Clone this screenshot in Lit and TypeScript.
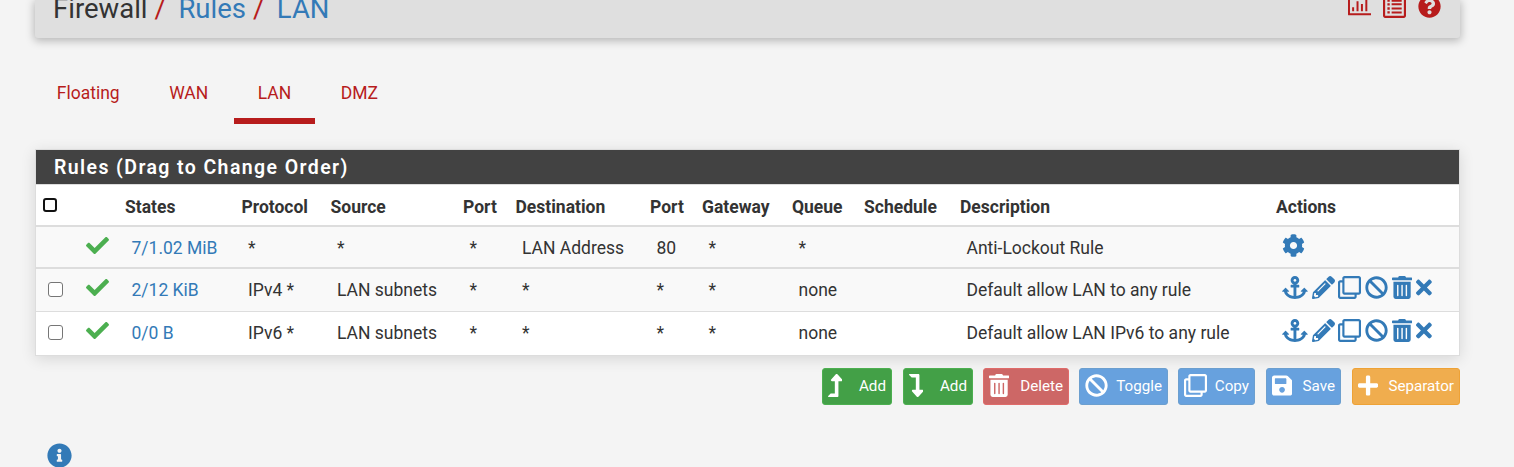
import { LitElement, html, css, svg } from "lit";
import { customElement, property } from "lit/decorators.js";

type Glyph = { w: number; d: string };

const GLYPHS: Record<string, Glyph> = {
  check: { w: 512, d: "M173.898 439.404l-166.4-166.4c-9.997-9.997-9.997-26.206 0-36.204l36.203-36.204c9.997-9.998 26.207-9.998 36.204 0L192 312.69 432.095 72.596c9.997-9.997 26.207-9.997 36.204 0l36.203 36.204c9.997 9.997 9.997 26.206 0 36.204l-294.4 294.401c-9.998 9.997-26.207 9.997-36.204-.001z" },
  cog: { w: 512, d: "M487.4 315.7l-42.6-24.6c4.3-23.2 4.3-47 0-70.2l42.6-24.6c4.9-2.8 7.1-8.6 5.5-14-11.1-35.6-30-67.8-54.7-94.6-3.8-4.1-10-5.1-14.8-2.3L380.8 110c-17.9-15.4-38.5-27.3-60.8-35.1V25.8c0-5.6-3.9-10.5-9.4-11.7-36.7-8.2-74.3-7.8-109.2 0-5.5 1.2-9.4 6.1-9.4 11.7V75c-22.2 7.9-42.8 19.8-60.8 35.1L88.7 85.5c-4.9-2.8-11-1.9-14.8 2.3-24.7 26.7-43.6 58.9-54.7 94.6-1.7 5.4.6 11.2 5.5 14L67.3 221c-4.3 23.2-4.3 47 0 70.2l-42.6 24.6c-4.9 2.8-7.1 8.6-5.5 14 11.1 35.6 30 67.8 54.7 94.6 3.8 4.1 10 5.1 14.8 2.3l42.6-24.6c17.9 15.4 38.5 27.3 60.8 35.1v49.2c0 5.6 3.9 10.5 9.4 11.7 36.7 8.2 74.3 7.8 109.2 0 5.5-1.2 9.4-6.1 9.4-11.7v-49.2c22.2-7.9 42.8-19.8 60.8-35.1l42.6 24.6c4.9 2.8 11 1.9 14.8-2.3 24.7-26.7 43.6-58.9 54.7-94.6 1.5-5.5-.7-11.3-5.6-14.1zM256 336c-44.1 0-80-35.9-80-80s35.9-80 80-80 80 35.9 80 80-35.9 80-80 80z" },
  anchor: { w: 576, d: "M12.971 352h32.394C67.172 454.735 181.944 512 288 512c106.229 0 220.853-57.38 242.635-160h32.394c10.691 0 16.045-12.926 8.485-20.485l-67.029-67.029c-4.686-4.686-12.284-4.686-16.971 0l-67.029 67.029c-7.56 7.56-2.206 20.485 8.485 20.485h35.146c-20.29 54.317-84.963 86.588-144.117 94.015V256h52c6.627 0 12-5.373 12-12v-40c0-6.627-5.373-12-12-12h-52v-5.47c37.281-13.226 63.995-48.816 63.995-90.53C383.994 42.804 340.849-.185 287.55.001 234.871.185 192 42.95 192 95.999c0 41.713 26.714 77.304 63.995 90.53V192H204c-6.627 0-12 5.373-12 12v40c0 6.627 5.373 12 12 12h52v190.015c-58.936-7.399-123.82-39.679-144.117-94.015h35.146c10.691 0 16.045-12.926 8.485-20.485l-67.029-67.029c-4.686-4.686-12.284-4.686-16.971 0L4.485 331.515C-3.074 339.074 2.28 352 12.971 352zM288 64c17.645 0 32 14.355 32 32s-14.355 32-32 32-32-14.355-32-32 14.355-32 32-32z" },
  pencil: { w: 512, d: "M497.9 142.1l-46.1 46.1c-4.7 4.7-12.3 4.7-17 0l-111-111c-4.7-4.7-4.7-12.3 0-17l46.1-46.1c18.7-18.7 49.1-18.7 67.9 0l60.1 60.1c18.8 18.7 18.8 49.1 0 67.9zM284.2 99.8L21.6 362.4.4 483.9c-2.9 16.4 11.4 30.6 27.8 27.8l121.5-21.3 262.6-262.6c4.7-4.7 4.7-12.3 0-17l-111-111c-4.8-4.7-12.4-4.7-17.1 0zM124.1 339.9c-5.5-5.5-5.5-14.3 0-19.8l154-154c5.5-5.5 14.3-5.5 19.8 0s5.5 14.3 0 19.8l-154 154c-5.5 5.5-14.3 5.5-19.8 0zM88 424h48v36.3l-64.5 11.3-31.1-31.1L51.7 376H88v48z" },
  clone: { w: 512, d: "M464 0H144c-26.51 0-48 21.49-48 48v48H48c-26.51 0-48 21.49-48 48v320c0 26.51 21.49 48 48 48h320c26.51 0 48-21.49 48-48v-48h48c26.51 0 48-21.49 48-48V48c0-26.51-21.49-48-48-48zM362 464H54a6 6 0 0 1-6-6V150a6 6 0 0 1 6-6h42v224c0 26.51 21.49 48 48 48h224v42a6 6 0 0 1-6 6zm96-96H150a6 6 0 0 1-6-6V54a6 6 0 0 1 6-6h308a6 6 0 0 1 6 6v308a6 6 0 0 1-6 6z" },
  ban: { w: 512, d: "M256 8C119.034 8 8 119.033 8 256s111.034 248 248 248 248-111.034 248-248S392.967 8 256 8zm130.108 117.892c65.448 65.448 70 165.481 20.677 235.637L150.47 105.216c70.204-49.356 170.226-44.735 235.638 20.676zM125.892 386.108c-65.448-65.448-70-165.481-20.677-235.637L361.53 406.784c-70.203 49.356-170.226 44.736-235.638-20.676z" },
  trash: { w: 448, d: "M32 464a48 48 0 0 0 48 48h288a48 48 0 0 0 48-48V128H32zm272-256a16 16 0 0 1 32 0v224a16 16 0 0 1-32 0zm-96 0a16 16 0 0 1 32 0v224a16 16 0 0 1-32 0zm-96 0a16 16 0 0 1 32 0v224a16 16 0 0 1-32 0zM432 32H312l-9.4-18.7A24 24 0 0 0 281.1 0H166.8a23.72 23.72 0 0 0-21.4 13.3L136 32H16A16 16 0 0 0 0 48v32a16 16 0 0 0 16 16h416a16 16 0 0 0 16-16V48a16 16 0 0 0-16-16z" },
  times: { w: 352, d: "M242.72 256l100.07-100.07c12.28-12.28 12.28-32.19 0-44.48l-22.24-22.24c-12.28-12.28-32.19-12.28-44.48 0L176 189.28 75.93 89.21c-12.28-12.28-32.19-12.28-44.48 0L9.21 111.45c-12.28 12.28-12.28 32.19 0 44.48L109.28 256 9.21 356.07c-12.28 12.28-12.28 32.19 0 44.48l22.24 22.24c12.28 12.28 32.2 12.28 44.48 0L176 322.72l100.07 100.07c12.28 12.28 32.2 12.28 44.48 0l22.24-22.24c12.28-12.28 12.28-32.19 0-44.48L242.72 256z" },
  up: { w: 320, d: "M313.553 119.669L209.587 7.666c-9.485-10.214-25.676-10.229-35.174 0L70.438 119.669C56.232 134.969 67.062 160 88.025 160H152v272H68.024a11.996 11.996 0 0 0-8.485 3.515l-56 56C-4.021 499.074 1.333 512 12.024 512H208c13.255 0 24-10.745 24-24V160h63.966c20.878 0 31.851-24.969 17.587-40.331z" },
  down: { w: 320, d: "M313.553 392.331L209.587 504.334c-9.485 10.214-25.676 10.229-35.174 0L70.438 392.331C56.232 377.031 67.062 352 88.025 352H152V80H68.024a11.996 11.996 0 0 1-8.485-3.515l-56-56C-4.021 12.926 1.333 0 12.024 0H208c13.255 0 24 10.745 24 24v328h63.966c20.878 0 31.851 24.969 17.587 40.331z" },
  save: { w: 448, d: "M433.941 129.941l-83.882-83.882A48 48 0 0 0 316.118 32H48C21.49 32 0 53.49 0 80v352c0 26.51 21.49 48 48 48h352c26.51 0 48-21.49 48-48V163.882a48 48 0 0 0-14.059-33.941zM224 416c-35.346 0-64-28.654-64-64 0-35.346 28.654-64 64-64s64 28.654 64 64c0 35.346-28.654 64-64 64zm96-304.52V212c0 6.627-5.373 12-12 12H76c-6.627 0-12-5.373-12-12V108c0-6.627 5.373-12 12-12h228.52c3.183 0 6.235 1.264 8.485 3.515l3.48 3.48A11.996 11.996 0 0 1 320 111.48z" },
  plus: { w: 448, d: "M416 208H272V64c0-17.67-14.33-32-32-32h-32c-17.67 0-32 14.33-32 32v144H32c-17.67 0-32 14.33-32 32v32c0 17.67 14.33 32 32 32h144v144c0 17.67 14.33 32 32 32h32c17.67 0 32-14.33 32-32V304h144c17.67 0 32-14.33 32-32v-32c0-17.67-14.33-32-32-32z" },
  info: { w: 512, d: "M256 8C119.043 8 8 119.083 8 256c0 136.997 111.043 248 248 248s248-111.003 248-248C504 119.083 392.957 8 256 8zm0 110c23.196 0 42 18.804 42 42s-18.804 42-42 42-42-18.804-42-42 18.804-42 42-42zm56 254c0 6.627-5.373 12-12 12h-88c-6.627 0-12-5.373-12-12v-24c0-6.627 5.373-12 12-12h12v-64h-12c-6.627 0-12-5.373-12-12v-24c0-6.627 5.373-12 12-12h64c6.627 0 12 5.373 12 12v100h12c6.627 0 12 5.373 12 12v24z" },
  question: { w: 512, d: "M504 256c0 136.997-111.043 248-248 248S8 392.997 8 256C8 119.083 119.043 8 256 8s248 111.083 248 248zM262.655 90c-54.497 0-89.255 22.957-116.549 63.758-3.536 5.286-2.353 12.415 2.715 16.258l34.699 26.31c5.205 3.947 12.621 3.008 16.665-2.122 17.864-22.658 30.113-35.797 57.303-35.797 20.429 0 45.698 13.148 45.698 32.958 0 14.976-12.363 22.667-32.534 33.976C247.128 238.528 216 254.941 216 296v4c0 6.627 5.373 12 12 12h56c6.627 0 12-5.373 12-12v-1.333c0-28.462 83.186-29.647 83.186-106.667 0-58.002-60.165-102-116.531-102zM256 338c-25.365 0-46 20.635-46 46 0 25.364 20.635 46 46 46s46-20.636 46-46c0-25.365-20.635-46-46-46z" },
  chart: { w: 512, d: "M0 64H44V408H512V452H20Q0 452 0 432ZM92 270H136V364H92ZM190 140H234V364H190ZM288 200H332V364H288ZM386 90H430V364H386Z" },
  list: { w: 512, d: "M464 0H48C21.5 0 0 21.5 0 48v416c0 26.500 21.500 48 48 48h416c26.500 0 48-21.500 48-48V48c0-26.500-21.500-48-48-48zM464 464H48V48H464zM192 104H416V148H192ZM192 186H416V230H192ZM192 278H416V322H192ZM192 366H416V410H192ZM98 100H150V152H98ZM98 182H150V234H98ZM98 274H150V326H98ZM98 362H150V414H98Z" },
};

@customElement("fw-icon")
class FwIcon extends LitElement {
  @property() name = "check";
  static styles = css`
    :host { display: inline-block; height: 23px; flex: none; }
    svg { display: block; height: 100%; width: auto; fill: currentColor; fill-rule: evenodd; }
  `;
  render() {
    const g = GLYPHS[this.name];
    return html`<svg viewBox="0 0 ${g.w} 512" width=${(g.w * 23) / 512} height="23">${svg`<path d=${g.d}></path>`}</svg>`;
  }
}

const COLUMNS = ["", "", "States", "Protocol", "Source", "Port", "Destination", "Port", "Gateway", "Queue", "Schedule", "Description", "Actions"];

const EDIT = ["anchor", "pencil", "clone", "ban", "trash", "times"];
const RULES = [
  { kind: "lockout", select: false, cells: ["7/1.02 MiB", "*", "*", "*", "LAN Address", "80", "*", "*", "", "Anti-Lockout Rule"], actions: ["cog"] },
  { kind: "striped", select: true, cells: ["2/12 KiB", "IPv4 *", "LAN subnets", "*", "*", "*", "*", "none", "", "Default allow LAN to any rule"], actions: EDIT },
  { kind: "plain", select: true, cells: ["0/0 B", "IPv6 *", "LAN subnets", "*", "*", "*", "*", "none", "", "Default allow LAN IPv6 to any rule"], actions: EDIT },
];

const BUTTONS = [
  { icon: "up", label: "Add", tone: "success", id: "b-up" },
  { icon: "down", label: "Add", tone: "success", id: "b-down" },
  { icon: "trash", label: "Delete", tone: "danger", id: "b-delete" },
  { icon: "ban", label: "Toggle", tone: "primary", id: "b-toggle" },
  { icon: "clone", label: "Copy", tone: "primary", id: "b-copy" },
  { icon: "save", label: "Save", tone: "primary", id: "b-save" },
  { icon: "plus", label: "Separator", tone: "warning", id: "b-separator" },
];

@customElement("app-root")
class AppRoot extends LitElement {
  static styles = css`
    :host {
      display: block; box-sizing: border-box; width: 100%; height: 467px; overflow: hidden;
      background: #f4f4f4; color: #333; font: 17.500px/26px Roboto, sans-serif; padding: 0 54px 0 35px;
    }
    a { color: #337ab7; text-decoration: none; }
    header {
      display: flex; justify-content: space-between; box-sizing: border-box; height: 38px;
      background: #dfdfdf; border-radius: 0 0 3px 3px; padding: 0 19px 0 18px;
      box-shadow: 0 2px 8px 1px rgba(0, 0, 0, 0.25);
    }
    .crumbs { display: flex; font-size: 27.500px; line-height: 32px; margin-top: -7px; white-space: pre; }
    .slash { color: #b71c1c; }
    .crumbs a { margin-left: 12.500px; }
    .crumbs .slash { margin-left: 7px; }
    .tools { display: flex; gap: 12px; color: #b71c1c; margin-top: -5px; }
    nav { display: flex; gap: 2px; margin: 42px 0 0 -2px; height: 44px; }
    .tab { box-sizing: border-box; color: #b71c1c; padding: 0 23.750px; height: 44px; border-bottom: 6px solid transparent; }
    .tab.on { border-color: #b71c1c; }
    .panel { margin-top: 25px; border: 1px solid #ddd; background: #fff; box-shadow: 0 3px 14px rgba(0, 0, 0, 0.12); }
    h2 {
      margin: 0; height: 34px; background: #424242; color: #fff; padding-left: 18px;
      font-size: 19.500px; line-height: 35px; font-weight: 600; letter-spacing: 1.400px;
    }
    table { width: 1423px; table-layout: fixed; border-collapse: separate; border-spacing: 0; }
    th, td { padding: 0; text-align: left; white-space: nowrap; box-sizing: border-box; border-top: 1px solid #ddd; vertical-align: top; }
    th { font-weight: 700; height: 41px; padding-top: 9px; padding-bottom: 0; }
    td { padding-left: 6.500px; height: 43px; padding-top: 8px; }
    .lockout td { border-top: 2px solid #ddd; height: 42px; background: #f9f9f9; }
    .striped td { border-top: 2px solid #ddd; height: 44px; background: #f9f9f9; }
    .plain td { height: 44px; }
    .c0 { width: 42px; } .c1 { width: 47px; } .c2 { width: 116.500px; } .c3 { width: 89px; }
    .c4 { width: 132.500px; } .c5 { width: 52.500px; } .c6 { width: 134.500px; } .c7 { width: 52px; }
    .c8 { width: 90px; } .c9 { width: 72px; } .c10 { width: 96px; } .c11 { width: 316px; } .c12 { width: 183px; }
    td .mark { color: #4caf50; margin: -1px 0 0 1px; }
    .box { box-sizing: border-box; display: block; width: 15px; height: 15px; border: 1px solid #767676; border-radius: 3px; background: #fff; margin: 5px 0 0 5.500px; }
    th .box { width: 14px; height: 14px; border: 2px solid #111; margin: 4px 0 0 7px; }
    .acts { display: flex; gap: 3.800px; color: #337ab7; margin: -1px 0 0 -0.500px; }
    .buttons { display: flex; justify-content: flex-end; margin-top: 12px; }
    .btn {
      box-sizing: border-box; display: flex; align-items: flex-start; justify-content: space-between; height: 37px; padding: 5px 5px;
      border: 1px solid; border-radius: 3px; color: #fff; font: 15.200px/24px Roboto, sans-serif;
    }
    .success { background: #43a047; border-color: #4caf50; }
    .danger { background: #cd6766; border-color: #df6b6a; }
    .primary { background: #67a1de; border-color: #6c9fcf; }
    .warning { background: #f0ad4e; border-color: #eea236; }
    .b-up { width: 70px; } .b-down { width: 70px; margin-left: 11px; } .b-delete { width: 86px; margin-left: 10px; }
    .b-toggle { width: 89px; margin-left: 10px; } .b-copy { width: 77px; margin-left: 10px; }
    .b-save { width: 75px; margin-left: 11px; } .b-separator { width: 108px; margin-left: 11px; }
    .info { color: #337ab7; padding: 38px 0 0 12px; }
    .info fw-icon { height: 25px; }
  `;

  render() {
    return html`
      <header>
        <div class="crumbs"><span>Firewall</span><span class="slash">/</span><a>Rules</a><span class="slash">/</span><a>LAN</a></div>
        <div class="tools">${["chart", "list", "question"].map((n) => html`<fw-icon name=${n}></fw-icon>`)}</div>
      </header>
      <nav>${["Floating", "WAN", "LAN", "DMZ"].map((t) => html`<div class="tab ${t === "LAN" ? "on" : ""}">${t}</div>`)}</nav>
      <section class="panel">
        <h2>Rules (Drag to Change Order)</h2>
        <table>
          <colgroup>${COLUMNS.map((_, i) => html`<col class="c${i}" />`)}</colgroup>
          <thead><tr>${COLUMNS.map((c, i) => html`<th>${i === 0 ? html`<span class="box"></span>` : c}</th>`)}</tr></thead>
          <tbody>
            ${RULES.map((r) => html`<tr class=${r.kind}>
              <td>${r.select ? html`<span class="box"></span>` : ""}</td>
              <td><fw-icon class="mark" name="check"></fw-icon></td>
              ${r.cells.map((c, i) => html`<td>${i === 0 ? html`<a>${c}</a>` : c}</td>`)}
              <td><div class="acts">${r.actions.map((a) => html`<fw-icon name=${a}></fw-icon>`)}</div></td>
            </tr>`)}
          </tbody>
        </table>
      </section>
      <div class="buttons">${BUTTONS.map((b) => html`<div class="btn ${b.tone} ${b.id}"><fw-icon name=${b.icon}></fw-icon><span>${b.label}</span></div>`)}</div>
      <div class="info"><fw-icon name="info"></fw-icon></div>
    `;
  }
}
